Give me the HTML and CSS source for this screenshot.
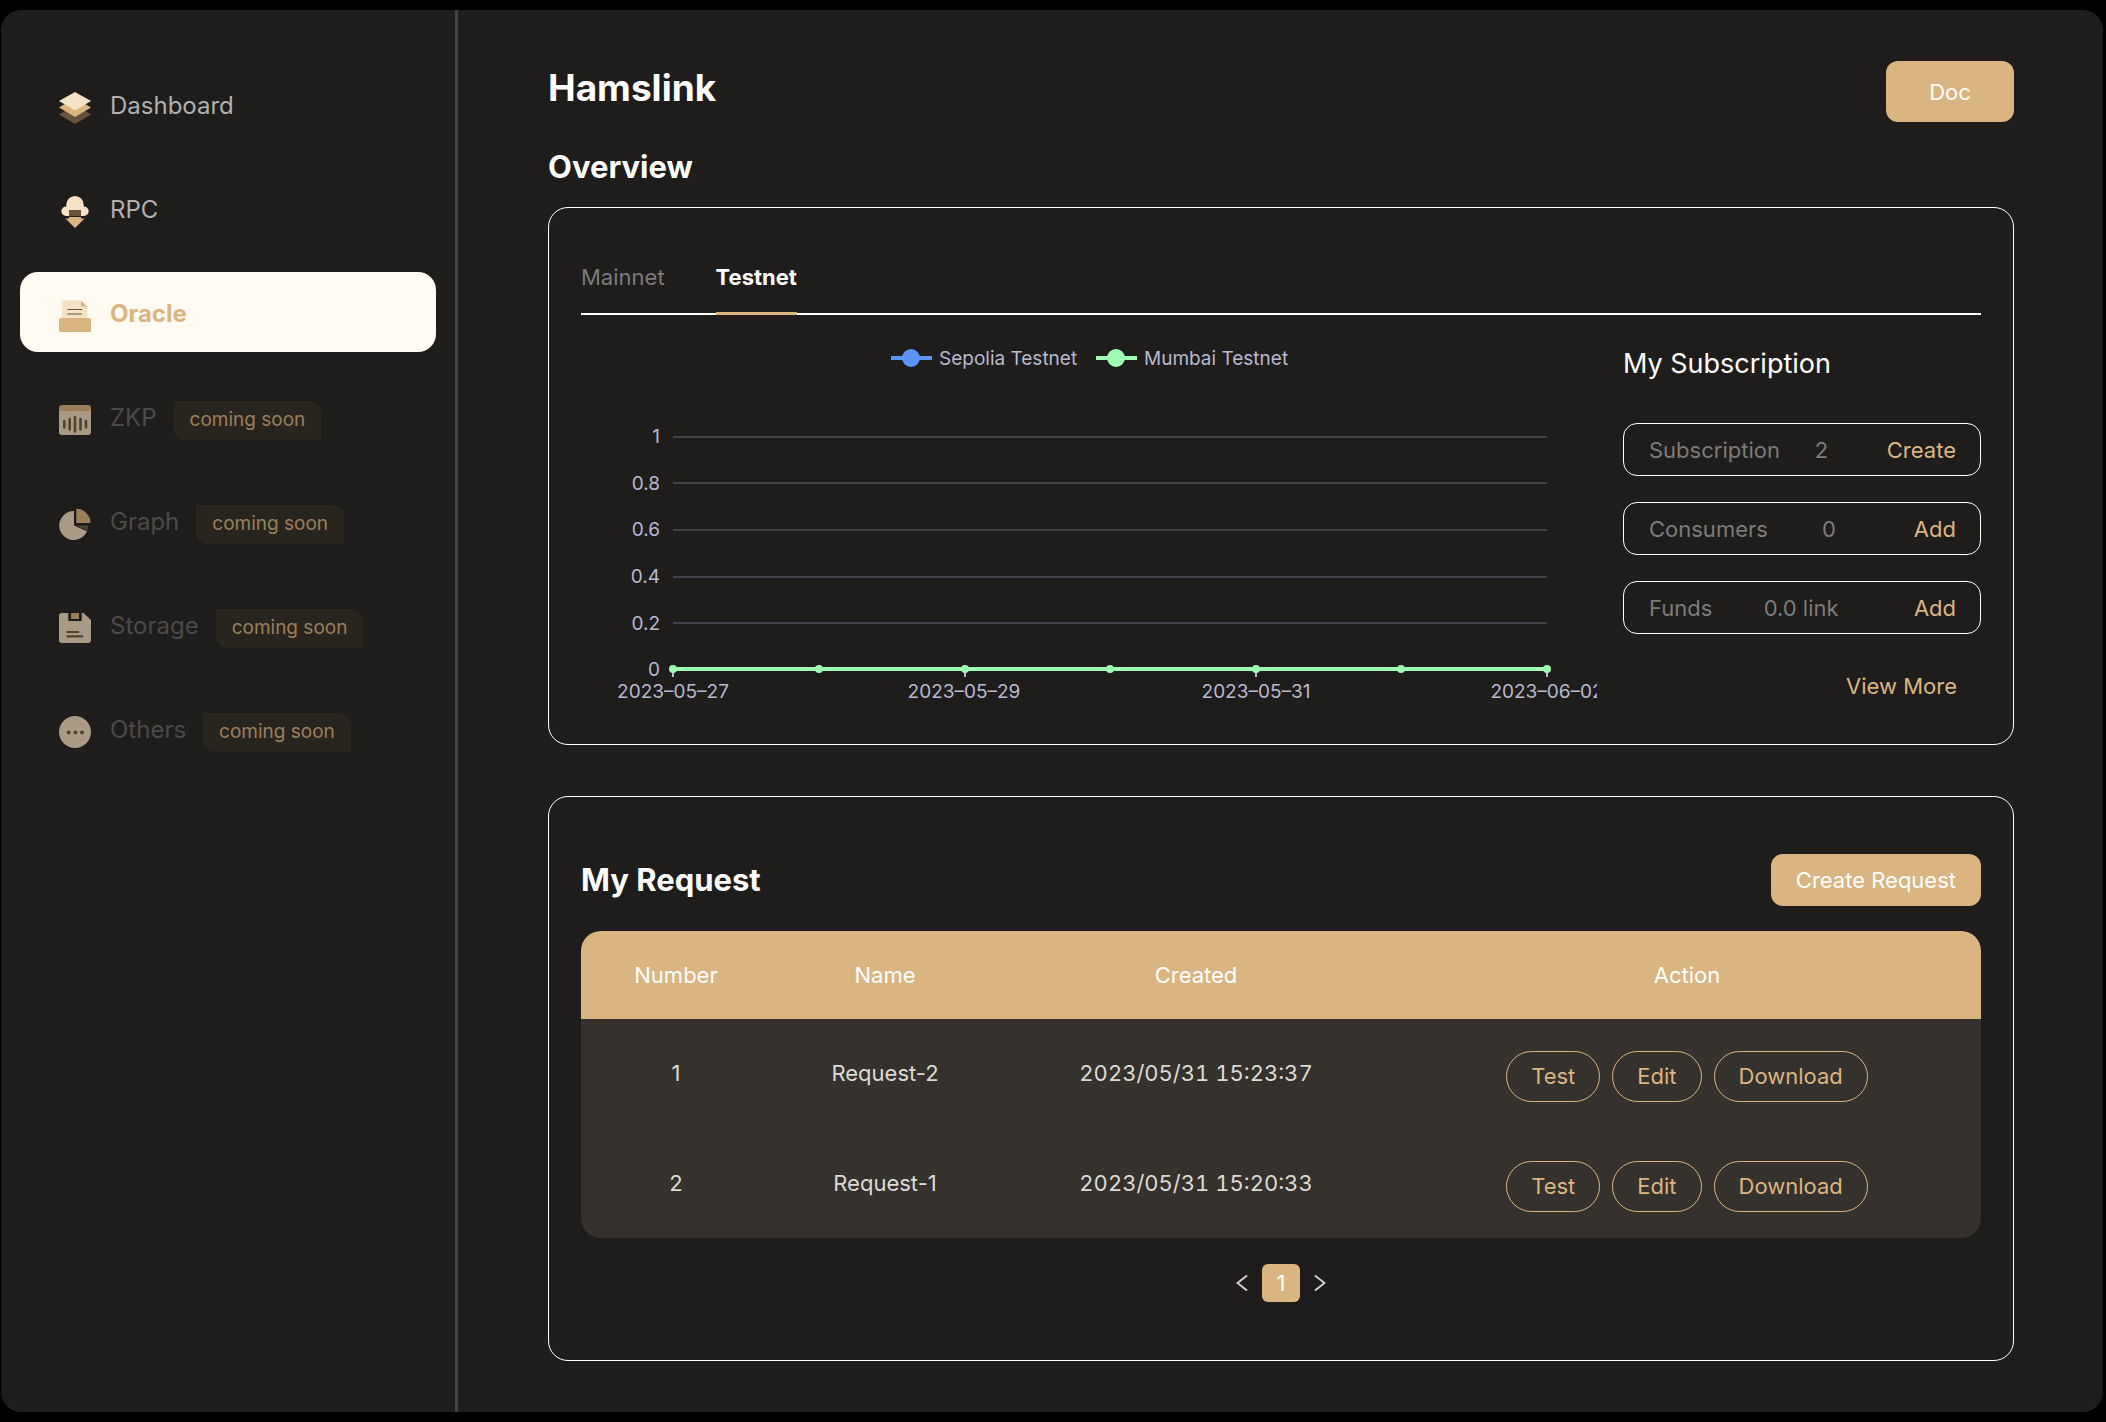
FILE: index.html
```html
<!DOCTYPE html>
<html lang="en">
<head>
<meta charset="utf-8">
<meta name="viewport" content="width=device-width, initial-scale=1">
<title>Hamslink</title>
<link rel="stylesheet" href="styles.css">
</head>
<body>
<div class="window">
  <nav class="sidebar" aria-label="Main">
    <a class="nav-item" href="#dashboard">
      <svg class="nav-icon" viewBox="0 0 32 32" aria-hidden="true">
        <path fill="#67533c" d="M16 13 32 22.500 16 32 0 22.500z"/>
        <path fill="#dbb581" d="M16 6 32 15.500 16 25 0 15.500z"/>
        <path fill="#f6e3c5" d="M16 0 32 9 16 18.500 0 9z"/>
      </svg>
      <span class="nav-label">Dashboard</span>
    </a>
    <a class="nav-item" href="#rpc">
      <svg class="nav-icon" viewBox="0 0 32 32" aria-hidden="true">
        <path fill="#f6e3c5" d="M7 20a4.700 4.700 0 0 1 0-9.400h.3V8.700a8.700 8.700 0 0 1 17.400 0v1.900h.3a4.700 4.700 0 0 1 0 9.400z"/>
        <path fill="#67533c" d="M10 14h12v6H10z"/>
        <path fill="#dbb581" d="M10 21h12v1.500h3.500L16 32 6.500 22.500H10z"/>
      </svg>
      <span class="nav-label">RPC</span>
    </a>
    <a class="nav-item nav-item-active" href="#oracle" aria-current="page">
      <svg class="nav-icon" viewBox="0 0 32 32" aria-hidden="true">
        <path fill="#f6e3c5" d="M4 .3h18l6.300 6.300V18H2.700V1.600A1.300 1.300 0 0 1 4 .3z"/>
        <path fill="#dbb581" d="M22 .8v5.800h6.300z"/>
        <path stroke="#67533c" d="M8.300 9.500h14.700M8.300 14h14.700"/>
        <rect fill="#dbb581" y="18" width="32" height="14" rx="1.500"/>
      </svg>
      <span class="nav-label">Oracle</span>
    </a>
    <a class="nav-item nav-item-soon" href="#zkp">
      <svg class="nav-icon" viewBox="0 0 32 32" aria-hidden="true">
        <path fill="#9b7f5b" d="M3 1h26a3 3 0 0 1 3 3v3H0V4a3 3 0 0 1 3-3z"/>
        <path fill="#a99a85" d="M0 7h32v21a3 3 0 0 1-3 3H3a3 3 0 0 1-3-3z"/>
        <path stroke="#4f4232" stroke-width="2.600" stroke-linecap="round" d="M5.300 17v6.500M10.700 15v10.500M16 13v14.500M21.500 15v10.500M27 17v6.500"/>
      </svg>
      <span class="nav-label">ZKP</span>
      <span class="badge">coming soon</span>
    </a>
    <a class="nav-item nav-item-soon" href="#graph">
      <svg class="nav-icon" viewBox="0 0 32 32" aria-hidden="true">
        <path fill="#a99a85" d="M15 3v14.500l13 5.800A14.500 14.500 0 1 1 15 3z"/>
        <path fill="#4f4232" d="M17 17.500h12.300l-1 5z"/>
        <path fill="#9b7f5b" d="M17.300 .8A14.300 14.300 0 0 1 31.500 15H17.300z"/>
      </svg>
      <span class="nav-label">Graph</span>
      <span class="badge">coming soon</span>
    </a>
    <a class="nav-item nav-item-soon" href="#storage">
      <svg class="nav-icon" viewBox="0 0 32 32" aria-hidden="true">
        <path fill="#a99a85" d="M3 1h6.300v8h13.400V1h1.800L32 8v20a3 3 0 0 1-3 3H3a3 3 0 0 1-3-3V4a3 3 0 0 1 3-3z"/>
        <path fill="#9b7f5b" d="M12 1h8v6h-8z"/>
        <path stroke="#4f4232" stroke-width="2.200" stroke-linecap="round" d="M8.300 20h11M8.300 24.300h15"/>
      </svg>
      <span class="nav-label">Storage</span>
      <span class="badge">coming soon</span>
    </a>
    <a class="nav-item nav-item-soon" href="#others">
      <svg class="nav-icon" viewBox="0 0 32 32" aria-hidden="true">
        <circle fill="#a99a85" cx="16" cy="16" r="16"/>
        <path stroke="#4f4232" stroke-width="4" stroke-linecap="round" d="M9.700 16.500h0M16.500 16.500h0M23 16.500h0"/>
      </svg>
      <span class="nav-label">Others</span>
      <span class="badge">coming soon</span>
    </a>
  </nav>

  <main class="content">
    <header class="page-head">
      <h1 class="page-title">Hamslink</h1>
      <button class="button button-doc" type="button">Doc</button>
    </header>
    <h2 class="section-title">Overview</h2>

    <section class="card overview">
      <div class="tabs" role="tablist">
        <button class="tab" type="button" role="tab" aria-selected="false">Mainnet</button>
        <button class="tab tab-active" type="button" role="tab" aria-selected="true">Testnet</button>
      </div>
      <div class="overview-body">
        <svg class="chart" viewBox="0 0 1016 388" role="img" aria-label="Requests per day">
          <g class="chart-sepolia">
            <path class="chart-line" d="M310 43h41"/>
            <circle cx="330" cy="43" r="9"/>
          </g>
          <text class="chart-text" x="358" y="50">Sepolia Testnet</text>
          <g class="chart-mumbai">
            <path class="chart-line" d="M515 43h41"/>
            <circle cx="535" cy="43" r="9"/>
          </g>
          <text class="chart-text" x="563" y="50">Mumbai Testnet</text>
          <path class="chart-grid" d="M92 122h874M92 168h874M92 215h874M92 262h874M92 308h874"/>
          <g class="chart-text chart-values">
            <text x="79" y="128">1</text>
            <text x="79" y="175">0.8</text>
            <text x="79" y="221">0.6</text>
            <text x="79" y="268">0.4</text>
            <text x="79" y="315">0.2</text>
            <text x="79" y="361">0</text>
          </g>
          <path class="chart-ticks" d="M92 354v8M384 354v8M675 354v8M966 354v8"/>
          <g class="chart-mumbai">
            <path class="chart-line" d="M92 354h874"/>
            <circle cx="92" cy="354" r="4"/><circle cx="238" cy="354" r="4"/><circle cx="384" cy="354" r="4"/><circle cx="529" cy="354" r="4"/><circle cx="675" cy="354" r="4"/><circle cx="820" cy="354" r="4"/><circle cx="966" cy="354" r="4"/>
          </g>
          <g class="chart-text chart-dates">
            <text x="92" y="383">2023–05–27</text>
            <text x="383" y="383">2023–05–29</text>
            <text x="675" y="383">2023–05–31</text>
            <text x="966" y="383">2023–06–02</text>
          </g>
        </svg>
        <aside class="subscription">
          <h3 class="subscription-title">My Subscription</h3>
          <div class="stat-list">
            <div class="stat"><span>Subscription</span><span>2</span><button class="stat-action" type="button">Create</button></div>
            <div class="stat"><span>Consumers</span><span>0</span><button class="stat-action" type="button">Add</button></div>
            <div class="stat"><span>Funds</span><span>0.0 link</span><button class="stat-action" type="button">Add</button></div>
          </div>
          <a class="view-more" href="#subscription">View More</a>
        </aside>
      </div>
    </section>

    <section class="card requests">
      <div class="requests-head">
        <h2 class="section-title">My Request</h2>
        <button class="button button-create" type="button">Create Request</button>
      </div>
      <table class="request-table">
        <colgroup><col class="col-number"><col class="col-name"><col class="col-created"><col></colgroup>
        <thead>
          <tr><th scope="col">Number</th><th scope="col">Name</th><th scope="col">Created</th><th scope="col">Action</th></tr>
        </thead>
        <tbody>
          <tr>
            <td>1</td><td>Request-2</td><td class="created">2023/05/31 15:23:37</td>
            <td><div class="actions"><button class="pill" type="button">Test</button><button class="pill" type="button">Edit</button><button class="pill" type="button">Download</button></div></td>
          </tr>
          <tr>
            <td>2</td><td>Request-1</td><td class="created">2023/05/31 15:20:33</td>
            <td><div class="actions"><button class="pill" type="button">Test</button><button class="pill" type="button">Edit</button><button class="pill" type="button">Download</button></div></td>
          </tr>
        </tbody>
      </table>
      <nav class="pagination" aria-label="Pages">
        <button class="page-arrow" type="button" aria-label="Previous page"><svg class="arrow-icon" viewBox="0 0 12 18" aria-hidden="true"><path d="M11 1.500 1.500 9 11 16.500"/></svg></button>
        <button class="page-number" type="button" aria-current="page">1</button>
        <button class="page-arrow" type="button" aria-label="Next page"><svg class="arrow-icon" viewBox="0 0 12 18" aria-hidden="true"><path d="M1 1.500 10.500 9 1 16.500"/></svg></button>
      </nav>
    </section>
  </main>
</div>
</body>
</html>
```
FILE: styles.css
```css
:root {
  --bg: #1e1d1b;
  --gold: #dbb581;
  --line: #fff;
  --muted: #7c7b7a;
}

* { box-sizing: border-box; }

body {
  margin: 0;
  padding: 10px 3px 11px 1px;
  min-height: 100vh;
  display: flex;
  background: #000;
  color: #fff;
  font: 400 22px/26px Inter, "Noto Sans", sans-serif;
}

h1, h2, h3 { margin: 0; }

button {
  padding: 0;
  border: 0;
  background: none;
  color: inherit;
  font: inherit;
  cursor: pointer;
}

a { color: inherit; text-decoration: none; }

.window {
  flex: 1;
  display: flex;
  background: var(--bg);
  border-radius: 20px;
  overflow: hidden;
}

/* Sidebar */
.sidebar {
  flex: none;
  width: 457px;
  padding: 54px 19px;
  border-right: 3px solid #424242;
  display: flex;
  flex-direction: column;
  gap: 24px;
}

.nav-item {
  height: 80px;
  padding: 23px 39px 0;
  border-radius: 18px;
  display: flex;
  align-items: baseline;
  color: #b1b0af;
}

.nav-item-active {
  background: #fffbf3;
  color: var(--gold);
  font-weight: 700;
}

.nav-item-soon { color: #4b4a49; }

.nav-icon {
  flex: none;
  align-self: flex-start;
  width: 32px;
  height: 32px;
  margin: 5px 19px 0 0;
}

.nav-label { font-size: 24px; line-height: 38px; }

.badge {
  margin-left: 17px;
  padding: 0 16px 2px;
  border-radius: 0 12px;
  background: #28251f;
  color: #9b7f5b;
  font-size: 19px;
  line-height: 37px;
}

/* Content */
.content {
  flex: 1;
  min-width: 0;
  padding: 51px 89px 51px 90px;
}

.page-head {
  display: flex;
  justify-content: space-between;
  align-items: flex-start;
}

.page-title { font-size: 37px; line-height: 54px; }

.section-title { font-size: 31px; line-height: 40px; }

.page-head + .section-title { margin: 25px 0 0; }

.button {
  border-radius: 12px;
  background: var(--gold);
  color: #fff;
}

.button-doc { width: 128px; height: 61px; }
.button-create { height: 52px; padding: 0 25px; }

.card {
  padding: 0 32px;
  border: 1px solid var(--line);
  border-radius: 20px;
}

.overview { margin-top: 20px; padding-bottom: 41px; }

.tabs {
  padding-top: 56px;
  display: flex;
  gap: 51px;
  border-bottom: 2px solid var(--line);
}

.tab {
  height: 51px;
  margin-bottom: -2px;
  padding-bottom: 22px;
  border-bottom: 3px solid transparent;
  color: var(--muted);
}

.tab-active {
  border-color: var(--gold);
  color: #fff;
  font-weight: 700;
}

.overview-body {
  display: flex;
  gap: 26px;
  align-items: flex-start;
}

.chart { flex: 1; min-width: 0; overflow: hidden; }

.chart-text {
  fill: #b9b8ce;
  font-size: 19px;
}

.chart-values { text-anchor: end; }
.chart-dates { text-anchor: middle; }
.chart-grid { stroke: #42414a; stroke-width: 2; }
.chart-ticks { stroke: #b9b8ce; stroke-width: 2; }
.chart-line { stroke-width: 4; }
.chart-sepolia { fill: #5b93f7; stroke: #5b93f7; }
.chart-mumbai { fill: #9ffcb5; stroke: #9ffcb5; }
.chart-sepolia circle, .chart-mumbai circle { stroke: none; }

.subscription {
  flex: none;
  width: 358px;
  padding-top: 31px;
  display: flex;
  flex-direction: column;
}

.subscription-title {
  font-size: 27px;
  font-weight: 400;
  line-height: 36px;
}

.stat-list {
  margin-top: 41px;
  display: grid;
  gap: 26px;
}

.stat {
  height: 53px;
  padding-left: 25px;
  border: 1px solid var(--line);
  border-radius: 14px;
  display: flex;
  justify-content: space-between;
  align-items: center;
  color: var(--muted);
}

.stat-action { padding: 0 24px; color: var(--gold); }

.view-more {
  margin: 39px 24px 0;
  align-self: flex-end;
  color: var(--gold);
}

/* Requests */
.requests { margin-top: 51px; padding-top: 57px; padding-bottom: 58px; }

.requests-head {
  display: flex;
  justify-content: space-between;
  align-items: center;
}

.request-table {
  width: 100%;
  margin-top: 25px;
  border-collapse: separate;
  border-spacing: 0;
  border-radius: 20px;
  overflow: hidden;
  table-layout: fixed;
  background: #35312c;
  color: #dcdad6;
  text-align: center;
}

.col-number { width: 190px; }
.col-name { width: 228px; }
.col-created { width: 394px; }

.request-table th {
  height: 88px;
  padding: 0;
  background: var(--gold);
  color: #fff;
  font-weight: 400;
}

.request-table td { height: 110px; padding: 0; }
.request-table .created { font-variant-numeric: tabular-nums; }
.request-table tbody tr:first-child td { height: 109px; border-bottom: 1px solid #302d29; }

.actions {
  padding-top: 6px;
  display: flex;
  justify-content: center;
  gap: 12px;
}

.pill {
  height: 51px;
  padding: 0 24px;
  border: 1px solid var(--gold);
  border-radius: 26px;
  color: var(--gold);
}

.pagination {
  margin-top: 26px;
  display: flex;
  justify-content: center;
  align-items: center;
  gap: 14px;
}

.page-arrow { display: flex; }

.arrow-icon {
  width: 12px;
  height: 18px;
  fill: none;
  stroke: #d0cfcc;
  stroke-width: 2;
}

.page-number {
  width: 38px;
  height: 38px;
  border-radius: 6px;
  background: var(--gold);
  color: #fff;
}
```
